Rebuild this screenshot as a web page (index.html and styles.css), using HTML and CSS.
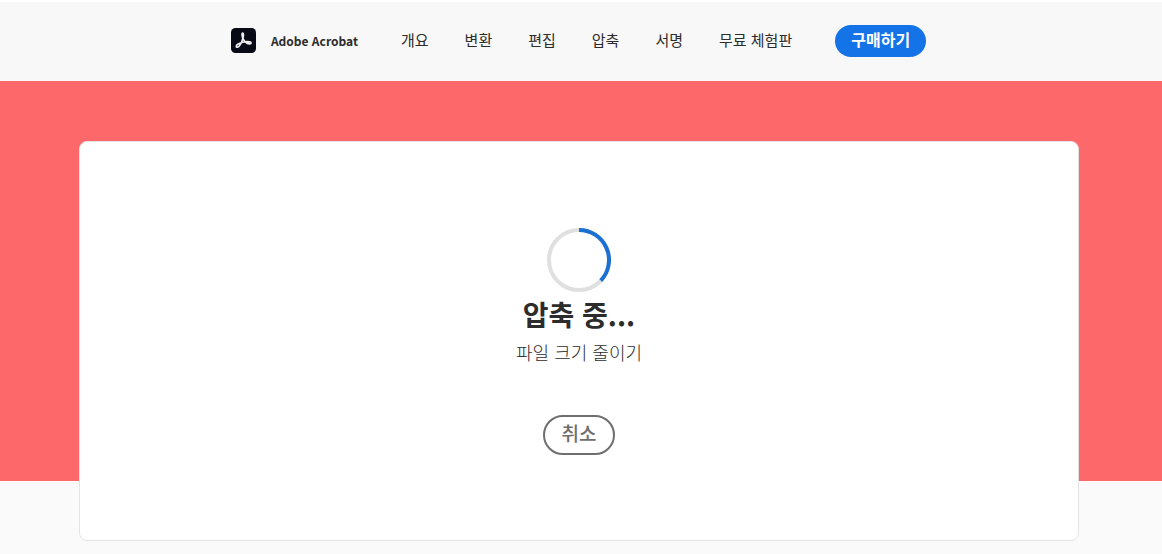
FILE: index.html
```html
<!DOCTYPE html>
<html lang="ko">
<head>
<meta charset="utf-8">
<meta name="viewport" content="width=device-width, initial-scale=1">
<title>Adobe Acrobat</title>
<link rel="stylesheet" href="styles.css">
</head>
<body>
<header class="header">
  <a class="brand" href="#">
    <svg class="brand-icon" viewBox="0 0 25 25" aria-hidden="true">
      <rect width="25" height="25" rx="4.5" fill="#080b16"/>
      <path d="M11.500 5.200c1.300-.1 1 2.600.5 4.700-.9 3.800-3.500 8.900-5.400 9.300-1.900.3-1.600-1.900.5-3.100 3-1.700 8.400-2.800 11.600-2.200 2.100.4 1.600 2.200-.2 2-2.900-.3-6-3.200-7-6.600-.5-1.900-.8-4 0-4.100z" fill="none" stroke="#f0f0f3" stroke-width="1.700" stroke-linejoin="round"/>
    </svg>
    <span class="brand-name">Adobe Acrobat</span>
  </a>
  <nav class="nav">
    <a href="#">개요</a>
    <a href="#">변환</a>
    <a href="#">편집</a>
    <a href="#">압축</a>
    <a href="#">서명</a>
    <a href="#">무료 체험판</a>
  </nav>
  <button class="buy" type="button">구매하기</button>
</header>
<main class="stage">
  <section class="card">
    <svg class="spinner" viewBox="0 0 64 64" role="img" aria-label="압축 중">
      <circle cx="32" cy="32" r="30" fill="none" stroke="#e0e0e0" stroke-width="4"/>
      <path d="M32 2A30 30 0 0 1 53.800 52.600" fill="none" stroke="#1b70d4" stroke-width="4"/>
    </svg>
    <h1 class="title">압축 중...</h1>
    <p class="subtitle">파일 크기 줄이기</p>
    <button class="cancel" type="button">취소</button>
  </section>
</main>
</body>
</html>
```
FILE: styles.css
```css
* {
  box-sizing: border-box;
}

body {
  margin: 0;
  background: #fafafa;
  color: #2c2c2c;
  font-family: "Noto Sans CJK KR", sans-serif;
}

.header {
  display: flex;
  align-items: center;
  justify-content: center;
  min-height: 81px;
  padding: 0 5px 2px 0;
  border-top: 2px solid #fff;
  background: #f8f8f8;
}

.brand {
  display: flex;
  align-items: center;
  gap: 15px;
  margin-right: 43px;
  color: #2c2c2c;
  text-decoration: none;
}

.brand-icon {
  width: 25px;
  height: 25px;
}

.brand-name {
  font-size: 12px;
  font-weight: 700;
  line-height: 20px;
}

.nav {
  display: flex;
  gap: 36px;
}

.nav a {
  color: #2c2c2c;
  font-size: 15px;
  line-height: 20px;
  padding-bottom: 2px;
  text-decoration: none;
}

.buy {
  height: 32px;
  margin-left: 43px;
  padding: 0 16px 3px;
  border: 0;
  border-radius: 16px;
  background: #1473e6;
  color: #fff;
  font: 700 16px/24px "Noto Sans CJK KR", sans-serif;
}

.stage {
  padding: 60px 83px 12px 79px;
  background: linear-gradient(#fd686a, #fd686a) top / 100% 400px no-repeat;
}

.card {
  display: flex;
  flex-direction: column;
  align-items: center;
  max-width: 1000px;
  min-height: 400px;
  margin: 0 auto;
  padding: 86px 20px 84px;
  border: 1px solid #e4e4e4;
  border-radius: 8px;
  background: #fff;
}

.spinner {
  width: 64px;
  height: 64px;
}

.title {
  margin: 2px 0 0;
  font-size: 28px;
  font-weight: 700;
  line-height: 40px;
}

.subtitle {
  margin: 6px 0 0;
  font-size: 18px;
  font-weight: 300;
  line-height: 24px;
}

.cancel {
  height: 40px;
  margin-top: 51px;
  padding: 0 17px 5px;
  border: 2px solid #6e6e6e;
  border-radius: 20px;
  background: #fff;
  color: #6e6e6e;
  font: 500 19px/28px "Noto Sans CJK KR", sans-serif;
}
```
